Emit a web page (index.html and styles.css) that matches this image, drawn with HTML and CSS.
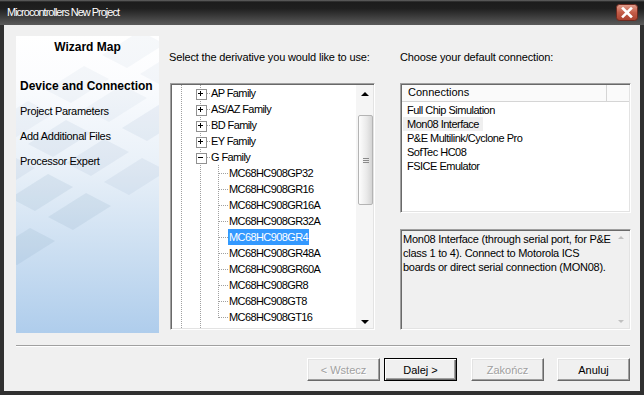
FILE: index.html
```html
<!DOCTYPE html>
<html lang="pl">

<head>
    <meta charset="UTF-8">
    <title>Microcontrollers New Project</title>
    <link rel="stylesheet" href="styles.css">
</head>

<body>
    <div class="window">
        <div class="titlebar">
            <span class="title">Microcontrollers New Project</span>
            <svg class="close" width="22" height="17" viewBox="0 0 22 17">
                <defs>
                    <linearGradient id="red" x1="0" y1="0" x2="0" y2="1">
                        <stop offset="0" stop-color="#e2a08f"/>
                        <stop offset="0.5" stop-color="#c45d48"/>
                        <stop offset="1" stop-color="#a8402e"/>
                    </linearGradient>
                </defs>
                <rect x="0.5" y="0.5" width="21" height="16" rx="3" fill="url(#red)" stroke="#6e2a20"/>
                <path d="M7 4.5 L15 12.5 M15 4.5 L7 12.5" stroke="#fff" stroke-width="2.6" stroke-linecap="square"/>
            </svg>
        </div>

        <div class="frame">
            <div class="panes">
                <div class="wizard-map">
                    <svg class="tiles" width="143" height="297" viewBox="0 0 143 297">
                        <g fill="#7b99bb" fill-opacity="0.07">
                            <path d="M30 54 l38 -24 l25 13 l-38 24 z"/>
                            <path d="M86 19 l38 -24 l25 13 l-38 24 z"/>
                            <path d="M-26 89 l38 -24 l25 13 l-38 24 z"/>
                            <path d="M68 73 l38 -24 l25 13 l-38 24 z"/>
                            <path d="M124 38 l38 -24 l25 13 l-38 24 z"/>
                        </g>
                        <g fill="#7b99bb" fill-opacity="0.11">
                            <path d="M12 108 l38 -24 l25 13 l-38 24 z"/>
                            <path d="M-44 143 l38 -24 l25 13 l-38 24 z"/>
                            <path d="M106 92 l38 -24 l25 13 l-38 24 z"/>
                            <path d="M50 127 l38 -24 l25 13 l-38 24 z"/>
                            <path d="M88 146 l38 -24 l25 13 l-38 24 z"/>
                        </g>
                        <g fill="#7b99bb" fill-opacity="0.14">
                            <path d="M-6 162 l38 -24 l25 13 l-38 24 z"/>
                            <path d="M32 181 l38 -24 l25 13 l-38 24 z"/>
                            <path d="M-24 216 l38 -24 l25 13 l-38 24 z"/>
                        </g>
                    </svg>
                    <div class="map-title">Wizard Map</div>
                    <ul class="steps">
                        <li class="current">Device and Connection</li>
                        <li>Project Parameters</li>
                        <li>Add Additional Files</li>
                        <li>Processor Expert</li>
                    </ul>
                </div>

                <div class="col derivative">
                    <div class="label">Select the derivative you would like to use:</div>
                    <div class="tree sunken">
                        <div class="tree-rows">
                            <div class="node"><i class="g"></i><i class="g exp plus"></i><span class="text">AP Family</span></div>
                            <div class="node"><i class="g"></i><i class="g exp plus"></i><span class="text">AS/AZ Family</span></div>
                            <div class="node"><i class="g"></i><i class="g exp plus"></i><span class="text">BD Family</span></div>
                            <div class="node"><i class="g"></i><i class="g exp plus"></i><span class="text">EY Family</span></div>
                            <div class="node"><i class="g"></i><i class="g exp minus"></i><span class="text">G Family</span></div>
                            <div class="node"><i class="g"></i><i class="g"></i><i class="g leaf"></i><span class="text">MC68HC908GP32</span></div>
                            <div class="node"><i class="g"></i><i class="g"></i><i class="g leaf"></i><span class="text">MC68HC908GR16</span></div>
                            <div class="node"><i class="g"></i><i class="g"></i><i class="g leaf"></i><span class="text">MC68HC908GR16A</span></div>
                            <div class="node"><i class="g"></i><i class="g"></i><i class="g leaf"></i><span class="text">MC68HC908GR32A</span></div>
                            <div class="node"><i class="g"></i><i class="g"></i><i class="g leaf"></i><span class="text selected">MC68HC908GR4</span></div>
                            <div class="node"><i class="g"></i><i class="g"></i><i class="g leaf"></i><span class="text">MC68HC908GR48A</span></div>
                            <div class="node"><i class="g"></i><i class="g"></i><i class="g leaf"></i><span class="text">MC68HC908GR60A</span></div>
                            <div class="node"><i class="g"></i><i class="g"></i><i class="g leaf"></i><span class="text">MC68HC908GR8</span></div>
                            <div class="node"><i class="g"></i><i class="g"></i><i class="g leaf"></i><span class="text">MC68HC908GT8</span></div>
                            <div class="node"><i class="g"></i><i class="g"></i><i class="g leaf last"></i><span class="text">MC68HC908GT16</span></div>
                            <div class="node"><i class="g"></i><i class="g exp plus"></i><span class="text">GZ Family</span></div>
                        </div>
                        <div class="vscroll">
                            <div class="arrow up"></div>
                            <div class="track">
                                <div class="thumb"><span class="grip"></span></div>
                            </div>
                            <div class="arrow down"></div>
                        </div>
                    </div>
                </div>

                <div class="col connection">
                    <div class="label">Choose your default connection:</div>
                    <div class="listview sunken">
                        <div class="header">
                            <span class="hcell">Connections</span>
                            <span class="hcell rest"></span>
                        </div>
                        <ul class="items">
                            <li><span>Full Chip Simulation</span></li>
                            <li><span class="focus">Mon08 Interface</span></li>
                            <li><span>P&amp;E Multilink/Cyclone Pro</span></li>
                            <li><span>SofTec HC08</span></li>
                            <li><span>FSICE Emulator</span></li>
                        </ul>
                    </div>
                    <div class="desc sunken">
                        <p>Mon08 Interface (through serial port, for P&amp;E<br>class 1 to 4). Connect to Motorola ICS<br>boards or direct serial connection (MON08).</p>
                        <div class="desc-scroll">
                            <span class="tri up"></span>
                            <span class="tri down"></span>
                        </div>
                    </div>
                </div>
            </div>

            <div class="separator"></div>

            <div class="buttons">
                <button class="btn" disabled>&lt; Wstecz</button>
                <button class="btn default">Dalej &gt;</button>
                <button class="btn wide-gap" disabled>Zakończ</button>
                <button class="btn">Anuluj</button>
            </div>
        </div>
    </div>
</body>

</html>
```

FILE: styles.css
```css
* {
    box-sizing: border-box;
}
body {
    margin: 0;
    background: #2e2e2e;
    font-family: "Liberation Sans", Arial, sans-serif;
    font-size: 11px;
    color: #000;
}
ul {
    list-style: none;
    margin: 0;
    padding: 0;
}

.window {
    width: 644px;
    height: 395px;
    display: flex;
    flex-direction: column;
}

/* title bar */
.titlebar {
    height: 25px;
    flex: none;
    display: flex;
    align-items: center;
    justify-content: space-between;
    padding: 0 6px 1px 7px;
    background: linear-gradient(to bottom, #6a6a6a 0, #1c1c1c 2px, #202020 35%, #4d4d4d 85%, #5a5a5a 100%);
}
.title {
    color: #fff;
    font-size: 11px;
    letter-spacing: -1px;
}
.close {
    display: block;
    margin-top: 1px;
}

/* dialog body */
.frame {
    flex: 1;
    border: 4px solid #303030;
    border-top: 0;
    background: #f0f0f0;
    padding: 11px 9px 0 12px;
    display: flex;
    flex-direction: column;
}
.panes {
    display: flex;
    height: 297px;
}

.wizard-map {
    width: 143px;
    flex: none;
    position: relative;
    overflow: hidden;
    background: linear-gradient(to bottom, #ffffff 0, #fbfcfe 15%, #e8f0f8 45%, #c9ddf1 75%, #afcdec 100%);
}
.tiles {
    position: absolute;
    left: 0;
    top: 0;
}
.map-title {
    position: relative;
    padding-top: 4px;
    line-height: 14px;
    text-align: center;
    font-weight: bold;
    font-size: 12px;
}
.steps {
    position: relative;
    margin-top: 20px;
    padding-left: 4px;
}
.steps li {
    line-height: 25px;
    letter-spacing: -0.3px;
}
.steps .current {
    font-weight: bold;
    font-size: 12px;
    letter-spacing: 0;
}

.col {
    display: flex;
    flex-direction: column;
}
.derivative {
    width: 206px;
    margin-left: 10px;
}
.connection {
    width: 231px;
    margin-left: 25px;
}
.label {
    margin: 14px 0 19px;
    line-height: 14px;
    letter-spacing: -0.15px;
    white-space: nowrap;
}

.sunken {
    border: 1px solid;
    border-color: #a0a0a0 #fff #fff #a0a0a0;
    padding: 1px;
    box-shadow: inset 1px 1px 0 #696969, inset -1px -1px 0 #e3e3e3;
}

/* tree */
.tree {
    margin-left: 1px;
    height: 247px;
    display: flex;
    background: #fff;
}
.tree-rows {
    flex: 1;
    overflow: hidden;
    background: #fff;
}
.node {
    display: flex;
    height: 16px;
    align-items: center;
    letter-spacing: -0.6px;
    white-space: nowrap;
}
.g {
    width: 19px;
    height: 16px;
    flex: none;
    position: relative;
    background-image: repeating-linear-gradient(to bottom, #a0a0a0 0 1px, transparent 1px 2px);
    background-size: 1px 16px;
    background-position: 9px 0;
    background-repeat: no-repeat;
}
.exp {
    background-image: repeating-linear-gradient(to bottom, #a0a0a0 0 1px, transparent 1px 2px),
        repeating-linear-gradient(to right, #a0a0a0 0 1px, transparent 1px 2px);
    background-size: 1px 16px, 10px 1px;
    background-position: 9px 0, 10px 8px;
}
.exp::before {
    content: "";
    position: absolute;
    left: 5px;
    top: 4px;
    width: 9px;
    height: 9px;
    border: 1px solid #919191;
    background: #fff;
}
.exp::after {
    content: "";
    position: absolute;
    left: 7px;
    top: 6px;
    width: 5px;
    height: 5px;
    background: linear-gradient(#000, #000) center / 5px 1px no-repeat;
}
.plus::after {
    background: linear-gradient(#000, #000) center / 5px 1px no-repeat,
        linear-gradient(#000, #000) center / 1px 5px no-repeat;
}
.leaf {
    width: 18px;
    background-image: repeating-linear-gradient(to bottom, #a0a0a0 0 1px, transparent 1px 2px),
        repeating-linear-gradient(to right, #a0a0a0 0 1px, transparent 1px 2px);
    background-size: 1px 16px, 9px 1px;
    background-position: 8px 0, 9px 8px;
}
.leaf.last {
    background-size: 1px 9px, 9px 1px;
}
.text {
    padding: 0 1px;
    line-height: 16px;
}
.selected {
    background: #3399ff;
    color: #fff;
}

.vscroll {
    width: 17px;
    flex: none;
    display: flex;
    flex-direction: column;
    background: #f5f5f5;
}
.arrow {
    height: 17px;
    flex: none;
    display: flex;
    align-items: center;
    justify-content: center;
}
.arrow::before {
    content: "";
    border: 4px solid transparent;
    border-top-width: 0;
    border-bottom-color: #000;
}
.arrow.down {
    height: 12px;
}
.arrow.down::before {
    border-top-width: 4px;
    border-top-color: #000;
    border-bottom-width: 0;
}
.track {
    flex: 1;
    padding-top: 13px;
}
.thumb {
    margin-left: 2px;
    height: 90px;
    border: 1px solid #b4b4b4;
    border-radius: 2px;
    background: linear-gradient(to right, #fdfdfd, #e9e9e9 60%, #d4d4d4);
    display: flex;
    align-items: center;
    justify-content: center;
}
.grip {
    width: 6px;
    height: 5px;
    background: repeating-linear-gradient(to bottom, #8a8a8a 0 1px, transparent 1px 2px);
}

/* connections list */
.listview {
    height: 130px;
    background: #fff;
}
.header {
    display: flex;
    height: 17px;
}
.hcell {
    width: 205px;
    padding-left: 6px;
    line-height: 15px;
    background: #fafafa;
    border-right: 1px solid #d5d5d5;
    border-bottom: 1px solid #d5d5d5;
}
.hcell.rest {
    flex: 1;
    width: auto;
    border-right: 0;
}
.items {
    padding-top: 1px;
}
.items li {
    height: 14px;
    line-height: 14px;
    letter-spacing: -0.5px;
}
.items span {
    display: inline-block;
    margin-left: 1px;
    padding: 0 4px;
}
.items .focus {
    background: #efefef;
}

/* description */
.desc {
    margin-top: 16px;
    height: 101px;
    display: flex;
    background: #f0f0f0;
}
.desc p {
    flex: 1;
    margin: 0;
    padding: 1px 0 0 1px;
    line-height: 14px;
    letter-spacing: -0.25px;
    white-space: nowrap;
}
.desc-scroll {
    width: 17px;
    flex: none;
    display: flex;
    flex-direction: column;
    justify-content: space-between;
    align-items: center;
    padding: 5px 0 5px;
}
.tri {
    border: 3px solid transparent;
    border-top-width: 0;
    border-bottom-color: #c0c0c0;
}
.tri.down {
    border-top-width: 3px;
    border-top-color: #c0c0c0;
    border-bottom-width: 0;
}

/* bottom */
.separator {
    margin-top: 12px;
    height: 2px;
    margin-right: 1px;
    border-top: 1px solid #a0a0a0;
    border-bottom: 1px solid #fff;
}
.buttons {
    display: flex;
    justify-content: flex-end;
    gap: 4px;
    margin-top: 11px;
    padding-right: 1px;
}
.btn {
    width: 73px;
    height: 23px;
    font-family: inherit;
    font-size: 11px;
    color: #000;
    background: #f0f0f0;
    border: 1px solid;
    border-color: #fff #696969 #696969 #fff;
    box-shadow: inset -1px -1px 0 #a0a0a0, inset 1px 1px 0 #e3e3e3;
    padding: 0;
}
.btn:disabled {
    color: #a0a0a0;
    text-shadow: 1px 1px 0 #fff;
}
.btn.default {
    border-color: #000;
    box-shadow: inset 1px 1px 0 #fff, inset -1px -1px 0 #696969, inset -2px -2px 0 #a0a0a0;
}
.btn.wide-gap {
    margin-left: 10px;
}
.btn + .btn:last-child {
    margin-left: 9px;
}
```
